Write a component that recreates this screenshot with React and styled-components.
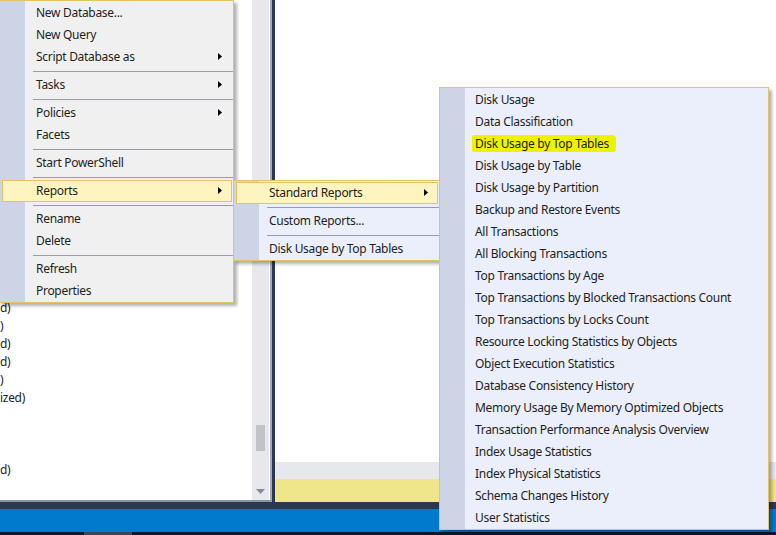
import React from 'react'
import styled, { createGlobalStyle } from 'styled-components'

const GlobalStyle = createGlobalStyle`
  html, body {
    margin: 0;
    padding: 0;
  }
  body {
    font-family: "Noto Sans", "Liberation Sans", sans-serif;
    font-size: 12px;
    color: #1e1e1e;
    overflow: hidden;
  }
`

const Screen = styled.div`
  position: relative;
  width: 776px;
  height: 535px;
  overflow: hidden;
  display: flex;
  flex-direction: column;
  background: #293955;
`

const Workspace = styled.div`
  display: flex;
  gap: 3px;
  height: 502px;
`

const Explorer = styled.div`
  display: flex;
  width: 272px;
  padding-right: 1px;
  box-sizing: border-box;
  background: #fff;
  border-right: 2px solid #a3a8b8;
  border-bottom: 2px solid #8d93a7;
`

const Tree = styled.div`
  width: 254px;
  overflow: hidden;
`

const TreeList = styled.ul`
  list-style: none;
  margin: -7px 0 0;
  padding: 0;
`

const TreeRow = styled.li`
  height: 18px;
  line-height: 18px;
  letter-spacing: -0.3px;
  white-space: nowrap;
`

const ScrollBar = styled.div`
  width: 17px;
  display: flex;
  flex-direction: column;
  align-items: center;
  background: #e8e8ec;
`

const Thumb = styled.div`
  width: 9px;
  height: 26px;
  margin-top: auto;
  margin-bottom: 32px;
  background: #c2c3c9;
`

const ArrowButton = styled.div`
  height: 17px;
  width: 17px;
  display: flex;
  align-items: center;
  justify-content: center;
`

const DocumentPane = styled.div`
  flex: 1;
  display: flex;
  flex-direction: column;
  background: #fff;
`

const DocumentBody = styled.div`
  flex: 1;
`

const TabStrip = styled.div`
  height: 17px;
  background: #e7e8ec;
`

const InfoBar = styled.div`
  height: 23px;
  background: #efe68c;
`

const Splitter = styled.div`
  height: 7px;
`

const StatusBar = styled.div`
  height: 23px;
  background: #007acc;
`

const Taskbar = styled.div`
  flex: 1;
  display: flex;
  padding-left: 84px;
  background: #0d1733;
`

const TaskButton = styled.div`
  width: 48px;
  background: #3b4662;
`

const Menu = styled.div`
  position: absolute;
  left: ${(p) => p.$x}px;
  top: ${(p) => p.$y}px;
  width: ${(p) => p.$w}px;
  box-sizing: border-box;
  padding: 1px 0 0;
  border: 1px solid #e5c365;
  background: linear-gradient(to right, #ccd4e5 0 25px, ${(p) => p.$bg} 25px);
  box-shadow: 3px 3px 3px rgba(0, 0, 0, 0.3);
`

const Item = styled.div`
  display: flex;
  align-items: center;
  height: 22px;
  box-sizing: border-box;
  margin: 0 1px 0 2px;
  padding: 0 9px 1px ${(p) => p.$indent}px;
  border: 1px solid ${(p) => (p.$active ? '#e5c365' : 'transparent')};
  background: ${(p) => (p.$active ? '#fdf4bf' : 'transparent')};
  letter-spacing: -0.3px;
  white-space: nowrap;
`

const Label = styled.span`
  flex: 1;
`

const Marker = styled.span`
  display: inline-block;
  line-height: 17px;
  margin-left: -3px;
  padding: 0 7px 0 3px;
  background: #eef200;
  border-radius: 2px 4px 3px 2px;
`

const Separator = styled.div`
  height: 6px;
  display: flex;
  align-items: center;
  padding-left: 33px;

  &::after {
    content: '';
    flex: 1;
    height: 1px;
    background: #999ca8;
  }
`

const Arrow = () => (
  <svg width="4" height="7" viewBox="0 0 4 7">
    <polygon points="0,0 4,3.5 0,7" fill="#000" />
  </svg>
)

const treeTails = [
  ...Array(17).fill(''),
  'd)',
  ')',
  'd)',
  'd)',
  ')',
  'ized)',
  '',
  '',
  '',
  'd)',
  '',
]

const mainMenu = [
  { label: 'New Database...' },
  { label: 'New Query' },
  { label: 'Script Database as', sub: true },
  'sep',
  { label: 'Tasks', sub: true },
  'sep',
  { label: 'Policies', sub: true },
  { label: 'Facets' },
  'sep',
  { label: 'Start PowerShell' },
  'sep',
  { label: 'Reports', sub: true, active: true },
  'sep',
  { label: 'Rename' },
  { label: 'Delete' },
  'sep',
  { label: 'Refresh' },
  { label: 'Properties' },
]

const reportsMenu = [
  { label: 'Standard Reports', sub: true, active: true },
  'sep',
  { label: 'Custom Reports...' },
  'sep',
  { label: 'Disk Usage by Top Tables' },
]

const standardReports = [
  'Disk Usage',
  'Data Classification',
  'Disk Usage by Top Tables',
  'Disk Usage by Table',
  'Disk Usage by Partition',
  'Backup and Restore Events',
  'All Transactions',
  'All Blocking Transactions',
  'Top Transactions by Age',
  'Top Transactions by Blocked Transactions Count',
  'Top Transactions by Locks Count',
  'Resource Locking Statistics by Objects',
  'Object Execution Statistics',
  'Database Consistency History',
  'Memory Usage By Memory Optimized Objects',
  'Transaction Performance Analysis Overview',
  'Index Usage Statistics',
  'Index Physical Statistics',
  'Schema Changes History',
  'User Statistics',
].map((label, i) => ({ label, marked: i === 2 }))

const MenuItems = ({ items, indent = 32 }) =>
  items.map((item, i) =>
    item === 'sep' ? (
      <Separator key={i} />
    ) : (
      <Item key={i} $active={item.active} $indent={indent}>
        <Label>{item.marked ? <Marker>{item.label}</Marker> : item.label}</Label>
        {item.sub && <Arrow />}
      </Item>
    )
  )

const App = () => (
  <>
    <GlobalStyle />
    <Screen>
      <Workspace>
        <Explorer>
          <Tree>
            <TreeList>
              {treeTails.map((t, i) => (
                <TreeRow key={i}>{t}</TreeRow>
              ))}
            </TreeList>
          </Tree>
          <ScrollBar>
            <Thumb />
            <ArrowButton>
              <svg width="9" height="5" viewBox="0 0 9 5">
                <polygon points="0,0 9,0 4.5,5" fill="#868999" />
              </svg>
            </ArrowButton>
          </ScrollBar>
        </Explorer>
        <DocumentPane>
          <DocumentBody />
          <TabStrip />
          <InfoBar />
        </DocumentPane>
      </Workspace>
      <Splitter />
      <StatusBar />
      <Taskbar>
        <TaskButton />
      </Taskbar>

      <Menu $x={-1} $y={0} $w={235} $bg="#f0f0f0">
        <MenuItems items={mainMenu} indent={33} />
      </Menu>
      <Menu $x={233} $y={180} $w={207} $bg="#eaeffb">
        <MenuItems items={reportsMenu} />
      </Menu>
      <Menu $x={439} $y={87} $w={330} $bg="#eaeffb">
        <MenuItems items={standardReports} />
      </Menu>
    </Screen>
  </>
)

export default App
